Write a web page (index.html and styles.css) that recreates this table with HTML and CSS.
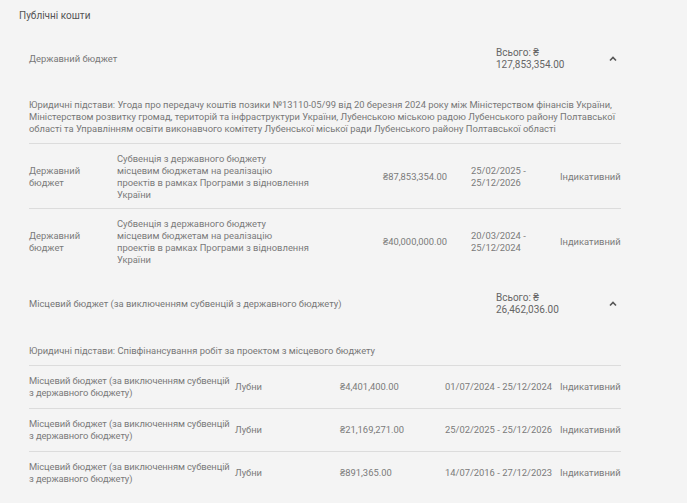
FILE: index.html
```html
<!DOCTYPE html>
<html lang="uk">
<head>
<meta charset="utf-8">
<link rel="stylesheet" href="styles.css">
</head>
<body>
<div class="page">
  <h1 class="title">Публічні кошти</h1>

  <section class="fund">
    <div class="fund-head">
      <div class="fund-name">Державний бюджет</div>
      <div class="fund-right">
        <div class="fund-total">Всього: ₴<br>127,853,354.00</div>
        <svg class="chev" width="16" height="10" viewBox="0 0 16 10"><polyline points="5,6.5 8,3.5 11,6.5" fill="none" stroke="#555" stroke-width="1.6"/></svg>
      </div>
    </div>
    <p class="legal">Юридичні підстави: Угода про передачу коштів позики №13110-05/99 від 20 березня 2024 року між Міністерством фінансів України, Міністерством розвитку громад, територій та інфраструктури України, Лубенською міською радою Лубенського району Полтавської області та Управлінням освіти виконавчого комітету Лубенської міської ради Лубенського району Полтавської області</p>
    <div class="rows">
      <div class="row row-a">
        <div>Державний<br>бюджет</div>
        <div class="nw">Субвенція з державного бюджету<br>місцевим бюджетам на реалізацію<br>проектів в рамках Програми з відновлення<br>України</div>
        <div>₴87,853,354.00</div>
        <div>25/02/2025 -<br>25/12/2026</div>
        <div>Індикативний</div>
      </div>
      <div class="row row-a">
        <div>Державний<br>бюджет</div>
        <div class="nw">Субвенція з державного бюджету<br>місцевим бюджетам на реалізацію<br>проектів в рамках Програми з відновлення<br>України</div>
        <div>₴40,000,000.00</div>
        <div>20/03/2024 -<br>25/12/2024</div>
        <div>Індикативний</div>
      </div>
    </div>
  </section>

  <section class="fund fund-2">
    <div class="fund-head">
      <div class="fund-name">Місцевий бюджет (за виключенням субвенцій з державного бюджету)</div>
      <div class="fund-right">
        <div class="fund-total">Всього: ₴<br>26,462,036.00</div>
        <svg class="chev" width="16" height="10" viewBox="0 0 16 10"><polyline points="5,6.5 8,3.5 11,6.5" fill="none" stroke="#555" stroke-width="1.6"/></svg>
      </div>
    </div>
    <p class="legal">Юридичні підстави: Співфінансування робіт за проектом з місцевого бюджету</p>
    <div class="rows">
      <div class="row row-b">
        <div class="nw src">Місцевий бюджет (за виключенням субвенцій<br>з державного бюджету)</div>
        <div>Лубни</div>
        <div>₴4,401,400.00</div>
        <div>01/07/2024 - 25/12/2024</div>
        <div>Індикативний</div>
      </div>
      <div class="row row-b">
        <div class="nw src">Місцевий бюджет (за виключенням субвенцій<br>з державного бюджету)</div>
        <div>Лубни</div>
        <div>₴21,169,271.00</div>
        <div>25/02/2025 - 25/12/2026</div>
        <div>Індикативний</div>
      </div>
      <div class="row row-b">
        <div class="nw src">Місцевий бюджет (за виключенням субвенцій<br>з державного бюджету)</div>
        <div>Лубни</div>
        <div>₴891,365.00</div>
        <div>14/07/2016 - 27/12/2023</div>
        <div>Індикативний</div>
      </div>
    </div>
  </section>
</div>
</body>
</html>
```

FILE: styles.css
```css
* { box-sizing: border-box; }
html, body { margin: 0; padding: 0; }
body {
  background: #f4f4f4;
  font-family: Roboto, "Liberation Sans", sans-serif;
  color: #7a7a7a;
  font-size: 9.4px;
  line-height: 12px;
}
.page {
  padding: 10px 66px 0 19px;
}
.title {
  margin: 0;
  font-size: 10px;
  font-weight: 400;
  line-height: 12px;
  color: #555;
}
.fund {
  padding-left: 10px;
}
.fund-head {
  display: flex;
  align-items: center;
  justify-content: space-between;
  margin-top: 25px;
  height: 24px;
}
.fund-2 .fund-head { margin-top: 19px; }
.fund-name {
  color: #777;
}
.fund-right {
  display: flex;
  align-items: center;
}
.fund-total {
  width: 90px;
  font-size: 10px;
  color: #666;
}
.chev {
  margin-left: 19px;
  display: block;
}
.legal {
  margin: 28px 0 0;
  color: #777;
}
.fund-2 .legal { margin-top: 29px; }
.rows {
  margin-top: 8px;
}
.row {
  display: grid;
  align-items: center;
  border-top: 1px solid #dcdcdc;
  padding: 9px 0 7px;
}
.row-a {
  grid-template-columns: 88px 266px 88px 89px 1fr;
}
.row-b {
  grid-template-columns: 206px 105px 105px 115px 1fr;
  padding: 9px 0 9px;
}
.nw {
  white-space: nowrap;
}
.src {
  letter-spacing: -0.1px;
}
```
